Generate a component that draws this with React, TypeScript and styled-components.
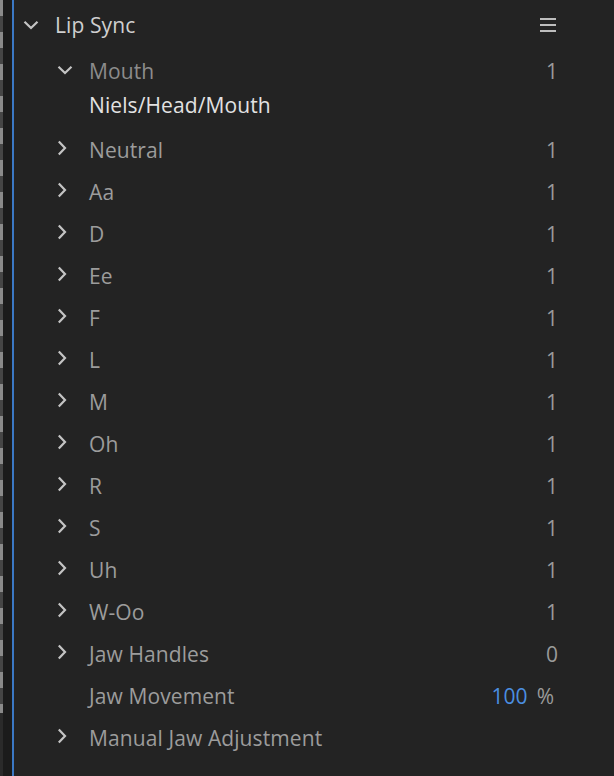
import React from "react";
import styled, { createGlobalStyle } from "styled-components";

const Global = createGlobalStyle`
  html, body { margin: 0; padding: 0; background: #232323; }
  body { font-family: "Open Sans", "Noto Sans", sans-serif; }
`;

const Frame = styled.div`
  display: flex;
  width: 614px;
  height: 776px;
  background: #232323;
  overflow: hidden;
`;

const StripTail = styled.div`
  display: flex;
  flex-direction: column;
  width: 3px;
  flex: none;
  background: #2a2a2a;
`;

const Strip = styled.div`
  width: 3px;
  height: 713px;
  background: repeating-linear-gradient(
    to bottom,
    #8a8a8a 0px,
    #8a8a8a 16px,
    #454545 16px,
    #454545 32px
  );
`;

const Gap = styled.div`
  width: 9px;
  flex: none;
  background: #1b1b1b;
`;

const BlueLine = styled.div`
  width: 2px;
  flex: none;
  background: #3b78c4;
`;

const Content = styled.div`
  flex: 1;
  display: flex;
  flex-direction: column;
  padding-right: 58px;
`;

const Row = styled.div<{ $h: number; $indent: number }>`
  display: flex;
  align-items: center;
  height: ${(p) => p.$h}px;
  padding-left: ${(p) => p.$indent}px;
  flex: none;
`;

const Twist = styled.div<{ $lift?: number }>`
  width: 32px;
  flex: none;
  display: flex;
  align-items: center;
  margin-bottom: ${(p) => p.$lift ?? 0}px;
`;

const Label = styled.span<{ $color: string }>`
  font-size: 21px;
  color: ${(p) => p.$color};
  flex: 1;
  white-space: nowrap;
  letter-spacing: 0.1px;
`;

const Value = styled.span<{ $shift?: number }>`
  font-size: 21px;
  color: #9a9a9a;
  margin-right: ${(p) => p.$shift ?? -2}px;
`;

const Blue = styled.span`
  color: #4b8fe0;
  margin-right: 9px;
`;

const Menu = styled.div`
  display: flex;
  flex-direction: column;
  gap: 4px;
  width: 16px;
  span {
    display: block;
    height: 2px;
    background: #bdbdbd;
  }
`;

const Down = () => (
  <svg width="16" height="10" viewBox="0 0 16 10">
    <path d="M1.5 1.8 L8 8 L14.5 1.8" fill="none" stroke="#c4c4c4" strokeWidth="2.2" />
  </svg>
);

const Right = () => (
  <svg width="10" height="16" viewBox="0 0 10 16">
    <path d="M1.8 1.5 L8 8 L1.8 14.5" fill="none" stroke="#c4c4c4" strokeWidth="2.2" />
  </svg>
);

const shapes = ["Neutral", "Aa", "D", "Ee", "F", "L", "M", "Oh", "R", "S", "Uh", "W-Oo"];

export default function App() {
  return (
    <>
      <Global />
      <Frame>
        <StripTail>
          <Strip />
        </StripTail>
        <Gap />
        <BlueLine />
        <Content>
          <Row $h={50} $indent={9}>
            <Twist>
              <Down />
            </Twist>
            <Label $color="#cfcfcf">Lip Sync</Label>
            <Menu>
              <span />
              <span />
              <span />
            </Menu>
          </Row>
          <Row $h={42} $indent={43}>
            <Twist $lift={2}>
              <Down />
            </Twist>
            <Label $color="#8c8c8c">Mouth</Label>
            <Value>1</Value>
          </Row>
          <Row $h={26} $indent={43}>
            <Twist />
            <Label $color="#e2e2e2">Niels/Head/Mouth</Label>
          </Row>
          <Row $h={11} $indent={43} />
          {shapes.map((s) => (
            <Row key={s} $h={42} $indent={43}>
              <Twist $lift={5}>
                <Right />
              </Twist>
              <Label $color="#9c9c9c">{s}</Label>
              <Value>1</Value>
            </Row>
          ))}
          <Row $h={42} $indent={43}>
            <Twist $lift={5}>
              <Right />
            </Twist>
            <Label $color="#9c9c9c">Jaw Handles</Label>
            <Value>0</Value>
          </Row>
          <Row $h={42} $indent={43}>
            <Twist />
            <Label $color="#9c9c9c">Jaw Movement</Label>
            <Value $shift={2}>
              <Blue>100</Blue>%
            </Value>
          </Row>
          <Row $h={42} $indent={43}>
            <Twist $lift={5}>
              <Right />
            </Twist>
            <Label $color="#9c9c9c">Manual Jaw Adjustment</Label>
          </Row>
        </Content>
      </Frame>
    </>
  );
}
